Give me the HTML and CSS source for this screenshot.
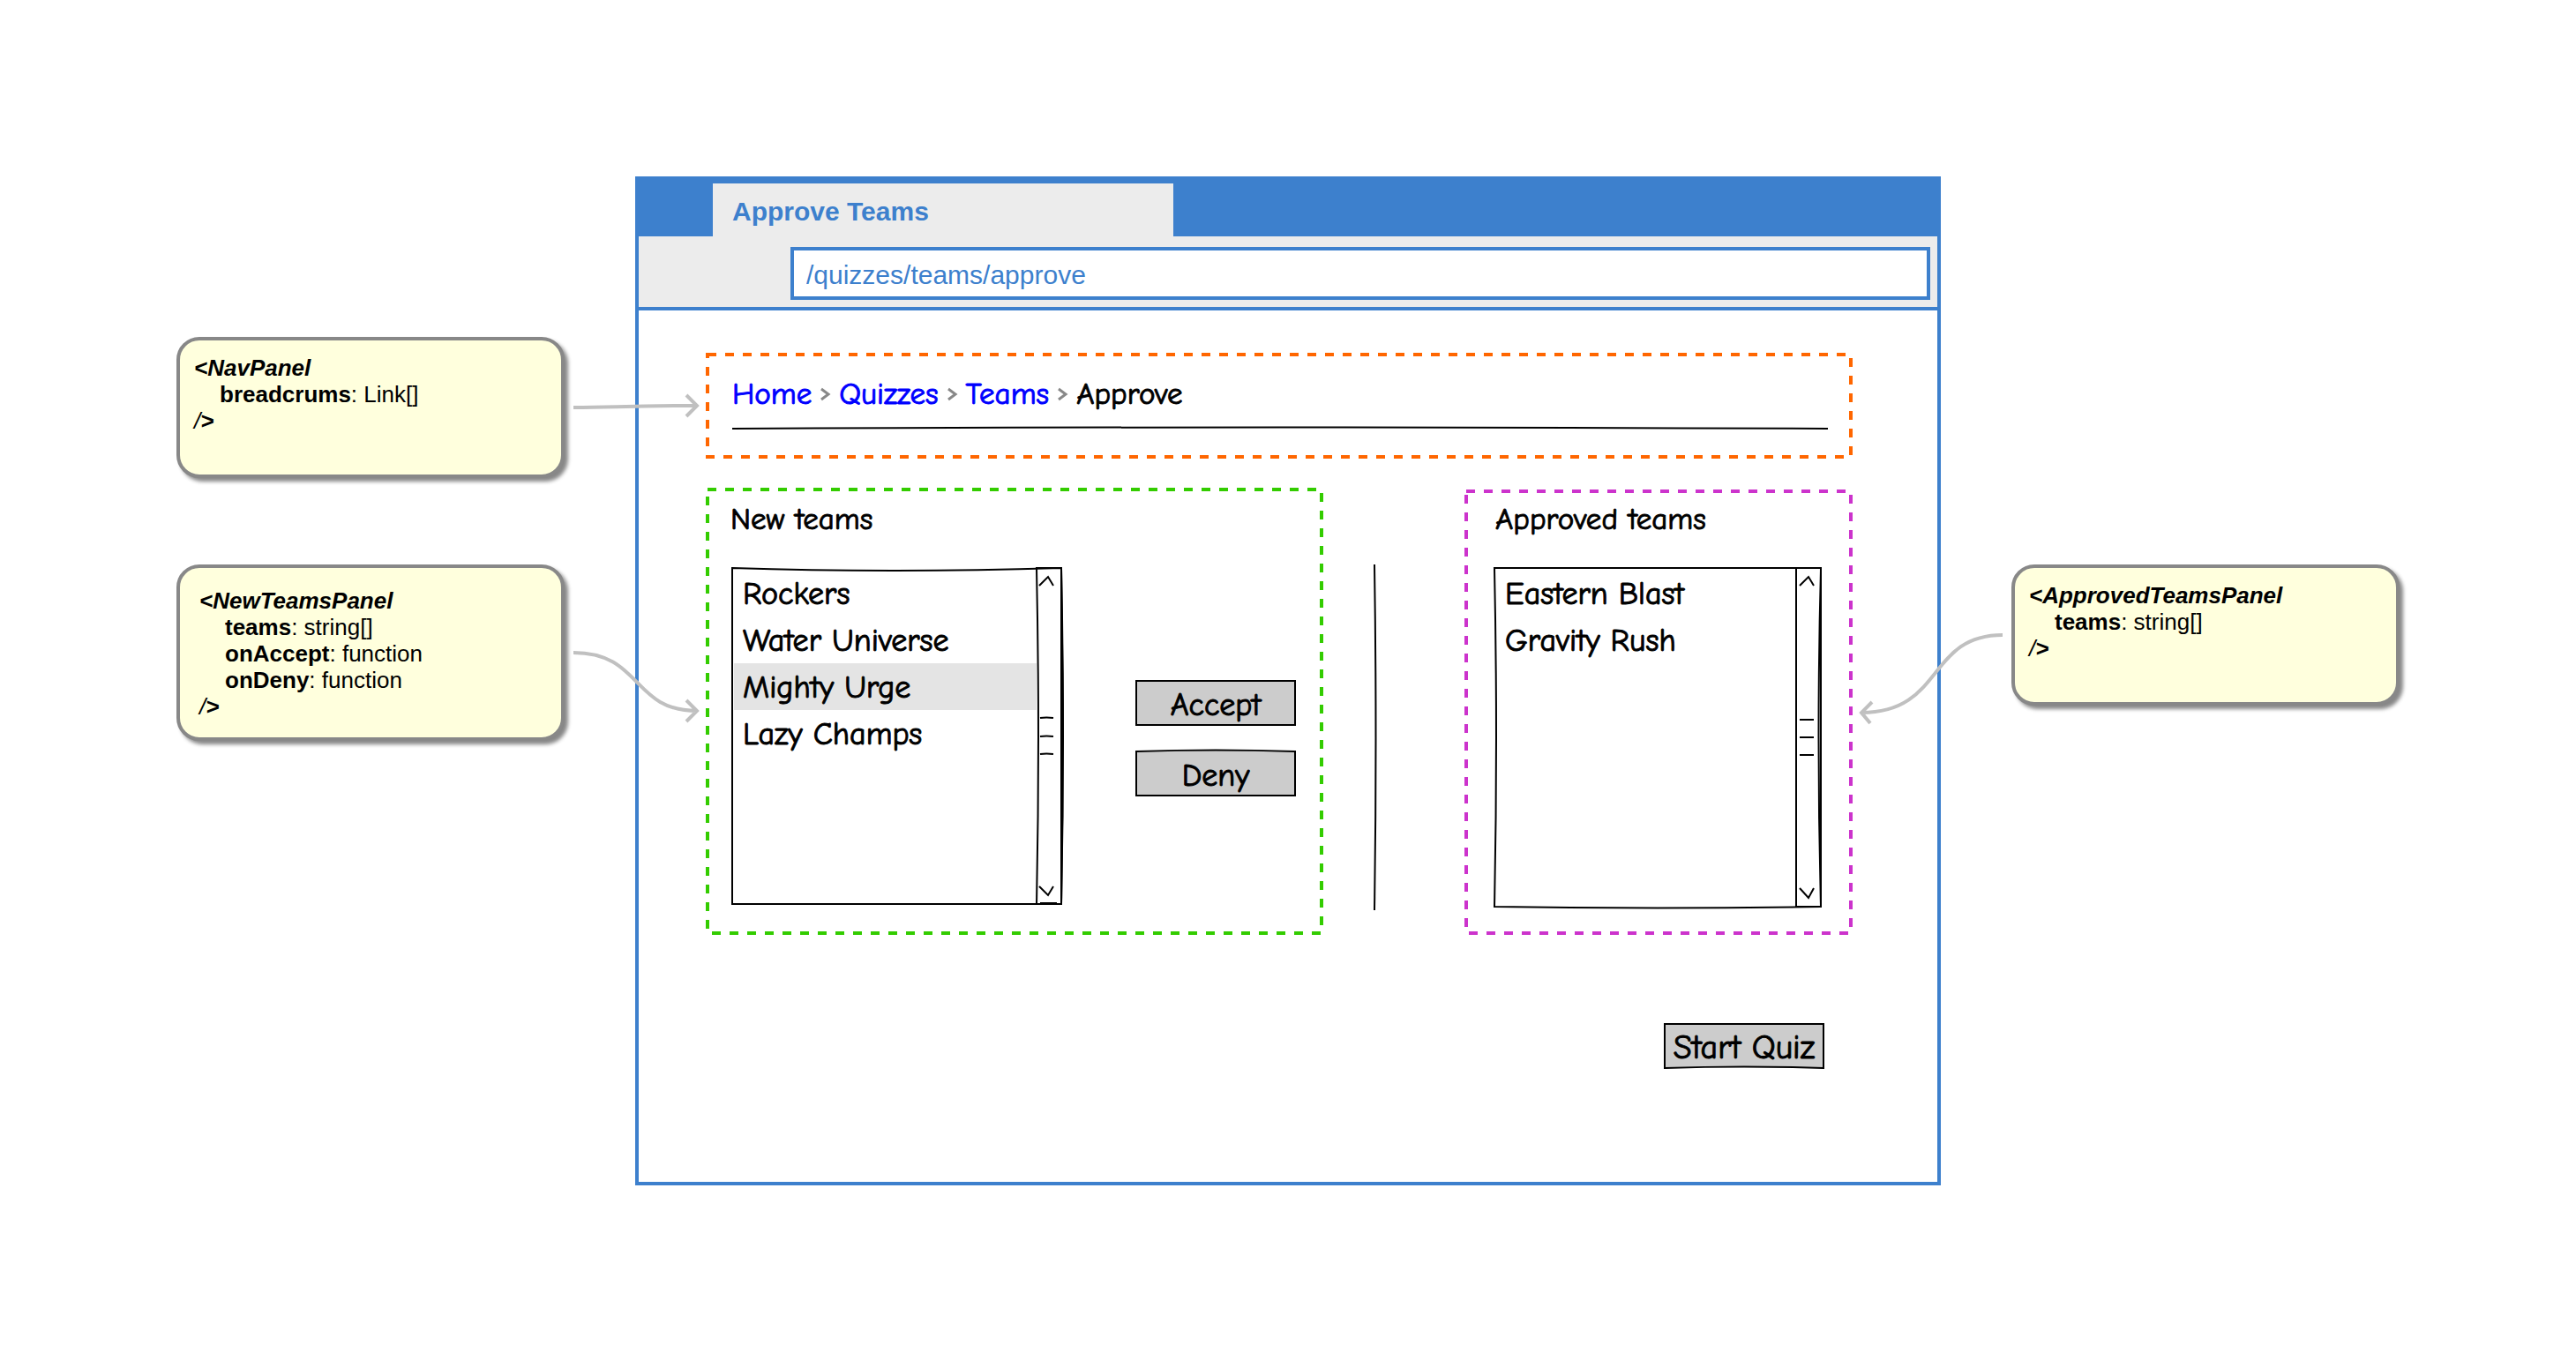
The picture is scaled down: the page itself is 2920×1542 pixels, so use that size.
FILE: index.html
```html
<!DOCTYPE html>
<html lang="en">
<head>
<meta charset="utf-8">
<title>Approve Teams</title>
<link rel="stylesheet" href="styles.css">
</head>
<body>
<div class="board">
  <aside class="notes notes-left">
    <section class="note">
      <p><b><i>&lt;NavPanel</i></b></p>
      <p class="prop"><b>breadcrums</b>: Link[]</p>
      <p><i>/</i><b><i>&gt;</i></b></p>
      <svg class="arrow arrow-nav" width="144" height="32" viewBox="0 0 144 32" aria-hidden="true">
        <path d="M0 18 C45 18 60 16 140 16 M128 4 L140 16 L128 28"/>
      </svg>
    </section>
    <section class="note note-tall">
      <p><b><i>&lt;NewTeamsPanel</i></b></p>
      <p class="prop"><b>teams</b>: string[]</p>
      <p class="prop"><b>onAccept</b>: function</p>
      <p class="prop"><b>onDeny</b>: function</p>
      <p><i>/</i><b><i>&gt;</i></b></p>
      <svg class="arrow arrow-new" width="144" height="84" viewBox="0 0 144 84" aria-hidden="true">
        <path d="M0 4 C78 4 66 70 140 70 M128 58 L140 70 L128 82"/>
      </svg>
    </section>
  </aside>

  <main class="window">
    <header class="tabs"><h1 class="tab">Approve Teams</h1></header>
    <div class="toolbar">
      <input class="address" type="text" aria-label="Address" value="/quizzes/teams/approve">
    </div>
    <div class="page">
      <nav class="panel panel-nav" aria-label="Breadcrumb">
        <svg class="frame" aria-hidden="true"><rect x="2" y="2"/></svg>
        <div class="crumbs">
          <a href="#home">Home</a>
          <svg class="chevron" width="11" height="14" viewBox="0 0 11 14" aria-hidden="true"><path d="M1 1 L9 7 L1 13"/></svg>
          <a href="#quizzes">Quizzes</a>
          <svg class="chevron" width="11" height="14" viewBox="0 0 11 14" aria-hidden="true"><path d="M1 1 L9 7 L1 13"/></svg>
          <a href="#teams">Teams</a>
          <svg class="chevron" width="11" height="14" viewBox="0 0 11 14" aria-hidden="true"><path d="M1 1 L9 7 L1 13"/></svg>
          <span>Approve</span>
        </div>
        <svg class="rule" viewBox="0 0 1242 4" preserveAspectRatio="none" aria-hidden="true"><path d="M0 3 Q621 0 1242 3"/></svg>
      </nav>

      <div class="teams">
        <section class="panel panel-new">
          <svg class="frame" aria-hidden="true"><rect x="2" y="2"/></svg>
          <div>
            <label class="label" for="new-teams">New teams</label>
            <div class="list list-new">
              <svg class="sketch" width="380" height="386" viewBox="0 0 380 386" aria-hidden="true">
                <path d="M3 2 Q180 8 376 2 Q380 193 376 383 H3 Z"/>
                <path d="M348 2 H376 V383 H348 Q352 193 348 2 Z"/>
                <path d="M376 2 Q379 193 376 383"/>
                <path d="M351 22 L361 12 L367 22 M351 363 L361 373 L367 363"/>
                <path d="M352 172 Q359 171 367 172 M352 193 Q359 192 367 193 M352 213 Q359 212 367 213 M352 382 H371"/>
              </svg>
              <select id="new-teams" size="4">
                <option>Rockers</option>
                <option>Water Universe</option>
                <option selected>Mighty Urge</option>
                <option>Lazy Champs</option>
              </select>
            </div>
          </div>
          <div class="actions">
            <button class="button" type="button">
              <svg class="sketch" width="182" height="52" viewBox="0 0 182 52" aria-hidden="true"><path d="M1 1 H181 V51 H1 Z"/></svg>
              <span>Accept</span>
            </button>
            <button class="button" type="button">
              <svg class="sketch" width="182" height="52" viewBox="0 0 182 52" aria-hidden="true"><path d="M1 1 Q91 -2 181 1 V51 H1 Z"/></svg>
              <span>Deny</span>
            </button>
          </div>
        </section>

        <svg class="divider" width="6" height="392" viewBox="0 0 6 392" aria-hidden="true"><path d="M2 0 Q5 196 2 392"/></svg>

        <section class="panel panel-approved">
          <svg class="frame" aria-hidden="true"><rect x="2" y="2"/></svg>
          <label class="label" for="approved-teams">Approved teams</label>
          <div class="list list-approved">
            <svg class="sketch" width="372" height="390" viewBox="0 0 372 390" aria-hidden="true">
              <path d="M0 2 H370 Q365 193 370 386 Q185 389 0 386 Q4 193 0 2 Z"/>
              <path d="M342 2 H370 V386 H342 Z"/>
              <path d="M346 22 L356 12 L362 22 M346 365 L356 376 L362 365"/>
              <path d="M346 174 H362 M346 194 H362 M346 214 H362"/>
            </svg>
            <select id="approved-teams" size="4">
              <option>Eastern Blast</option>
              <option>Gravity Rush</option>
            </select>
          </div>
        </section>
      </div>

      <footer class="footer">
        <button class="button button-start" type="button">
          <svg class="sketch" width="182" height="52" viewBox="0 0 182 52" aria-hidden="true"><path d="M1 1 H181 V51 Q91 48 1 51 Z"/></svg>
          <span>Start Quiz</span>
        </button>
      </footer>
    </div>
  </main>

  <aside class="notes notes-right">
    <section class="note">
      <p><b><i>&lt;ApprovedTeamsPanel</i></b></p>
      <p class="prop"><b>teams</b>: string[]</p>
      <p><i>/</i><b><i>&gt;</i></b></p>
      <svg class="arrow arrow-approved" width="164" height="106" viewBox="0 0 164 106" aria-hidden="true">
        <path d="M164 4 C78 4 98 92 4 92 M16 80 L4 92 L14 104"/>
      </svg>
    </section>
  </aside>
</div>
</body>
</html>
```
FILE: styles.css
```css
:root {
  --blue: #3d80cd;
  --hand: "Comic Sans MS", "Comic Neue", "Open Sans", sans-serif;
  --sans: "Liberation Sans", Arial, sans-serif;
}

* {
  box-sizing: border-box;
}

body {
  margin: 0;
  background: #fff;
  color: #000;
  font-family: var(--sans);
}

p,
h1 {
  margin: 0;
}

svg {
  display: block;
  fill: none;
  overflow: visible;
}

.board {
  display: grid;
  grid-template-columns: 440px minmax(0, 1fr) 440px;
  gap: 80px;
  padding: 200px;
  padding-bottom: 198px;
}

/* Component notes */
.notes {
  display: flex;
  flex-direction: column;
  gap: 98px;
  position: relative;
  z-index: 1;
}

.notes-left {
  padding-top: 182px;
}

.notes-right {
  padding-top: 440px;
}

.note {
  position: relative;
  min-height: 160px;
  padding: 16px;
  border: 4px solid #888;
  border-radius: 26px;
  background: #ffffdd;
  box-shadow: 4px 4px 4px #888;
  font-size: 26px;
  line-height: 30px;
}

.note-tall {
  min-height: 200px;
  padding: 22px 22px 20px;
}

.prop {
  padding-left: 29px;
}

.arrow {
  position: absolute;
  stroke: #c0c0c0;
  stroke-width: 4;
}

.arrow-nav {
  left: 446px;
  top: 58px;
}

.arrow-new {
  left: 446px;
  top: 92px;
}

.arrow-approved {
  right: 446px;
  top: 72px;
}

/* Browser window */
.window {
  border: 4px solid var(--blue);
}

.tabs {
  display: flex;
  padding: 4px 84px 0;
  background: var(--blue);
}

.tab {
  flex: 0 1 522px;
  padding: 4px 22px 0;
  background: #ececec;
  color: var(--blue);
  font-size: 30px;
  line-height: 56px;
}

.toolbar {
  display: flex;
  padding: 12px 8px 8px 172px;
  border-bottom: 4px solid var(--blue);
  background: #ececec;
}

.address {
  flex: 1;
  min-width: 0;
  height: 60px;
  padding: 4px 14px 0;
  border: 4px solid var(--blue);
  border-radius: 0;
  background: #fff;
  color: var(--blue);
  font: 30px var(--sans);
}

.page {
  padding: 48px 96px 128px 76px;
  font-family: var(--hand);
  -webkit-text-stroke: 1px currentColor;
}

/* Dashed panels */
.panel {
  position: relative;
}

.frame {
  position: absolute;
  inset: 0;
  width: 100%;
  height: 100%;
  pointer-events: none;
}

.frame rect {
  width: calc(100% - 4px);
  height: calc(100% - 4px);
  stroke-width: 4;
  stroke-dasharray: 10 10;
}

.panel-nav {
  padding: 25px 28px 33px 30px;
}

.panel-nav .frame {
  stroke: #ff6600;
}

.crumbs {
  display: flex;
  align-items: center;
  gap: 10px;
  font-size: 35px;
  line-height: 44px;
}

.crumbs a {
  color: #0000ff;
  text-decoration: none;
}

.chevron {
  stroke: #888;
  stroke-width: 3;
}

.rule {
  width: 100%;
  height: 4px;
  margin-top: 14px;
  stroke: #000;
  stroke-width: 2;
}

.teams {
  display: grid;
  grid-template-columns: 700fr 160fr 440fr;
  align-items: end;
  margin-top: 33px;
}

.panel-new {
  display: flex;
  justify-content: space-between;
  padding: 14px 31px 32px 27px;
}

.panel-new .frame {
  stroke: #33cc00;
}

.panel-approved {
  padding: 12px 34px 28px;
}

.panel-approved .frame {
  stroke: #cc33cc;
}

.label {
  display: block;
  margin-bottom: 31px;
  padding-left: 1px;
  font-size: 35px;
  line-height: 44px;
}

.divider {
  margin: 0 0 28px 56px;
  stroke: #000;
  stroke-width: 2;
}

/* Hand-drawn list boxes */
.sketch {
  position: absolute;
  left: 0;
  top: 0;
  stroke: #000;
  stroke-width: 2;
}

.list {
  position: relative;
}

.list-new {
  width: 380px;
  height: 386px;
  padding: 4px 32px 4px 5px;
}

.list-approved {
  width: 372px;
  height: 390px;
  padding: 4px 32px 4px 2px;
}

.list select {
  display: block;
  position: relative;
  width: 100%;
  height: 100%;
  padding: 0;
  border: 0;
  outline: 0;
  background: transparent;
  color: #000;
  font: 36px var(--hand);
  appearance: none;
  overflow: hidden;
}

.list option {
  height: 53px;
  padding: 7px 10px 0;
}

.list option:checked {
  background: linear-gradient(#e4e4e4, #e4e4e4);
  color: #000;
}

/* Buttons */
.actions {
  display: flex;
  flex-direction: column;
  gap: 28px;
  padding-top: 204px;
}

.button {
  position: relative;
  width: 182px;
  height: 52px;
  padding: 5px 0 0;
  border: 0;
  background: none;
  color: #000;
  font: 36px/47px var(--hand);
}

.button .sketch {
  fill: #ccc;
}

.button span {
  position: relative;
}

.button-start {
  font-size: 38px;
}

.footer {
  display: flex;
  justify-content: flex-end;
  padding: 100px 32px 0;
}
```
